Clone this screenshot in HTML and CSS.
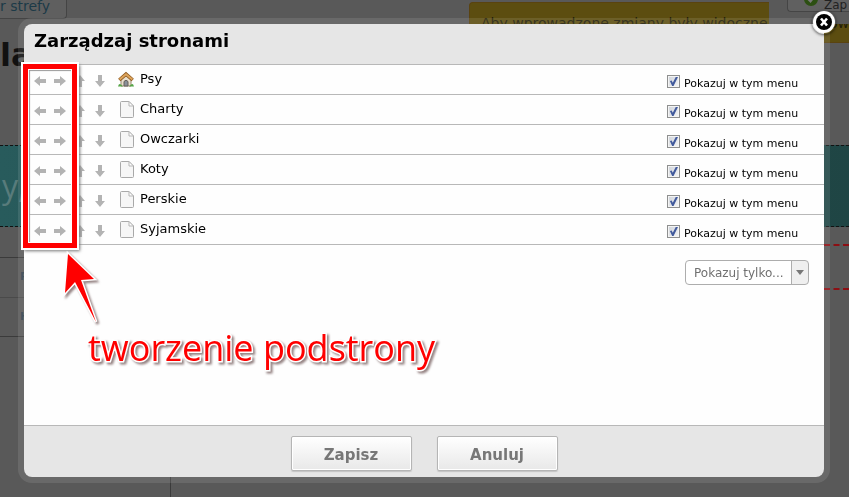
FILE: index.html
```
<!DOCTYPE html>
<html lang="pl">
<head>
    <meta charset="UTF-8">
    <meta name="viewport" content="width=device-width, initial-scale=1.0">
    <title>Zarządzaj stronami</title>
    <link rel="stylesheet" href="styles.css">
</head>
<body>
    <svg class="sprite" aria-hidden="true">
        <symbol id="arrow" viewBox="0 0 12 12">
            <path d="M0 6 L6 1 V4 H12 V8 H6 V11 Z"/>
        </symbol>
        <symbol id="page" viewBox="-2 0 16 17">
            <path d="M1.5 .5 H9 L13.500 5 V15.500 Q13.500 16.500 12.500 16.500 H1.500 Q.5 16.500 .5 15.500 V1.500 Q.5 .5 1.500 .5 Z" fill="#f6f6f6" stroke="#a9a9a9"/>
            <path d="M9 .5 V5 H13.500 Z" fill="#fff" stroke="#b5b5b5"/>
        </symbol>
        <symbol id="home" viewBox="0 0 16 15">
            <path d="M3 7 L8 3 L13 7 V14 H3 Z" fill="#e9dfcd" stroke="#9b8a74"/>
            <path d="M6 14 V9.500 Q8 7 10 9.500 V14 Z" fill="#8a8f99" stroke="#66605a"/>
            <path d="M1.300 8 L8 2.200 L14.700 8" fill="none" stroke="#8f5a20" stroke-width="3.600"/>
            <path d="M1.600 7.600 L8 2.200 L14.400 7.600" fill="none" stroke="#dda45c" stroke-width="2"/>
            <path d="M0 14.500 Q1 11 3 12.500 L5 14.500 Z M16 14.500 Q15 11 13 12.500 L11 14.500 Z" fill="#55a546"/>
        </symbol>
    </svg>

    <div class="page">
        <header class="topbar">
            <button class="zone-button">r strefy</button>
            <div class="toolbar">
                <button class="save-button">
                    <svg width="14" height="14" viewBox="0 0 14 14"><circle cx="7" cy="7" r="7" fill="#2c4f12"/><path d="M4 7 L6.500 9.500 L10.500 4.500" fill="none" stroke="#777" stroke-width="2"/></svg>
                    Zap
                </button>
            </div>
            <p class="notice"><span>Aby wprowadzone zmiany były widoczne ,</span><span>ow</span></p>
        </header>
        <h1 class="site-name">la</h1>
        <div class="banner">y,</div>
        <div class="fields">
            <div class="field-row">P</div>
            <div class="field-row">H</div>
        </div>
        <div class="marks"></div>
        <div class="columns"></div>
    </div>

    <div class="overlay">
        <div class="modal" role="dialog" aria-labelledby="modal-title">
            <button class="close" aria-label="Zamknij">
                <svg width="24" height="24" viewBox="0 0 24 24">
                    <circle cx="12" cy="12" r="11" fill="#fff"/>
                    <circle cx="12" cy="12" r="8" fill="#000"/>
                    <path d="M9 8.500 L15 15.500 M15 8.500 L9 15.500" stroke="#fff" stroke-width="2.600"/>
                </svg>
            </button>
            <h2 class="modal-title" id="modal-title">Zarządzaj stronami</h2>
            <div class="modal-body">
                <ul class="page-list" id="page-list"></ul>
                <div class="filter">
                    <select aria-label="Pokazuj tylko">
                        <option>Pokazuj tylko...</option>
                    </select>
                </div>
                <div class="highlight"></div>
                <div class="hint">
                    <svg width="40" height="80" viewBox="0 0 40 80">
                        <path d="M7 2 L33 27 L20 28 L35 70 L14 30 L4 41 Z"/>
                    </svg>
                    <span>tworzenie podstrony</span>
                </div>
            </div>
            <div class="modal-footer">
                <button>Zapisz</button>
                <button>Anuluj</button>
            </div>
        </div>
    </div>

    <script>
        const strony = ['Psy', 'Charty', 'Owczarki', 'Koty', 'Perskie', 'Syjamskie'];
        const kierunki = [['left', 'W lewo'], ['right', 'W prawo'], ['up', 'W górę'], ['down', 'W dół']];

        document.getElementById('page-list').innerHTML = strony.map((nazwa, i) => `
            <li class="page-row">
                <span class="moves">
                    ${kierunki.map(([k, opis]) => `<button aria-label="${opis}"><svg class="arrow ${k}"><use href="#arrow"/></svg></button>`).join('')}
                </span>
                <svg class="page-icon"><use href="#${i === 0 ? 'home' : 'page'}"/></svg>
                <span class="page-name">${nazwa}</span>
                <span class="in-menu">
                    <input type="checkbox" id="menu${i}" checked>
                    <label for="menu${i}">Pokazuj w tym menu</label>
                </span>
            </li>`).join('');
    </script>
</body>
</html>
```
FILE: styles.css
```
* {
    box-sizing: border-box;
}
body {
    margin: 0;
    height: 100vh;
    overflow: hidden;
    background-color: #595959;
    font-family: Verdana, "DejaVu Sans", sans-serif;
    color: #000;
}
button {
    font-family: inherit;
    cursor: pointer;
}
.sprite {
    position: absolute;
    width: 0;
    height: 0;
}

/* strona pod spodem */
.page {
    position: relative;
    z-index: 0;
    display: flex;
    flex-direction: column;
    height: 100vh;
}
.topbar {
    position: relative;
    display: flex;
    justify-content: space-between;
    align-items: flex-start;
    height: 36px;
    flex: none;
}
.zone-button {
    height: 19px;
    padding: 0 16px 5px 0;
    border: 1px solid #444;
    border-width: 0 1px 1px 0;
    border-radius: 0 0 4px 0;
    background-color: #5f5f5f;
    color: #1c3a47;
    font-size: 14px;
    line-height: 13px;
}
.toolbar {
    position: relative;
    z-index: 1;
    width: 80px;
    height: 24px;
    padding-left: 18px;
    background-color: #595959;
}
.save-button {
    display: flex;
    align-items: flex-start;
    gap: 6px;
    width: 100%;
    height: 12px;
    padding: 0 0 0 16px;
    border: 1px solid #454545;
    border-width: 0 0 1px 1px;
    border-radius: 0 0 0 4px;
    background-color: #606060;
    color: #222;
    font-size: 12px;
    line-height: 10px;
}
.save-button svg {
    flex: none;
    margin-top: -8px;
}
.notice {
    position: absolute;
    top: 2px;
    right: 0;
    display: flex;
    justify-content: space-between;
    width: 380px;
    height: 41px;
    margin: 0;
    padding: 10px 0 0 11px;
    border: 1px solid #5a4310;
    border-right: 0;
    border-radius: 4px 0 0 4px;
    background-color: #5c4d10;
    color: #221d08;
    font-size: 14px;
    line-height: 20px;
}
.site-name {
    height: 109px;
    margin: 0;
    color: #111;
    font-size: 32px;
    line-height: 38px;
}
.banner {
    height: 82px;
    padding-left: 2px;
    border: 1px dashed #111;
    border-width: 1px 0;
    background: linear-gradient(90deg, #285b5c, #1f4544);
    color: #587b7b;
    font-family: "Open Sans", sans-serif;
    font-size: 32px;
    line-height: 80px;
}
.fields {
    margin-top: 30px;
    border-top: 1px solid #3b3b3b;
    border-bottom: 1px solid #3b3b3b;
    width: 171px;
}
.field-row {
    height: 39px;
    padding-left: 20px;
    color: #33424f;
    font-size: 11px;
    font-weight: bold;
    line-height: 38px;
}
.field-row + .field-row {
    border-top: 1px solid #4a4a4a;
}
/* czerwone linie po prawej */
.marks {
    position: absolute;
    top: 244px;
    right: 0;
    width: 25px;
    height: 46px;
    border: 2px dashed #8c0f14;
    border-width: 2px 0;
}
.columns {
    flex: 1;
    width: 171px;
    border-right: 1px solid #3b3b3b;
}

/* okno */
.overlay {
    position: fixed;
    inset: 0;
    display: flex;
    padding: 18px 19px 14px 18px;
}
.modal {
    position: relative;
    display: flex;
    flex-direction: column;
    flex: 1;
    border: 6px solid rgba(255, 255, 255, 0.1);
    border-radius: 14px;
    background-color: #e6e6e6;
    background-clip: padding-box;
}
.close {
    position: absolute;
    top: -14px;
    right: -12px;
    width: 24px;
    height: 24px;
    padding: 0;
    border: 0;
    border-radius: 50%;
    background: none;
    box-shadow: 0 1px 3px rgba(0, 0, 0, 0.6);
}
.close svg {
    display: block;
}
.modal-title {
    margin: 0;
    padding: 0 10px;
    border-bottom: 1px solid #b8b8b8;
    font-size: 18px;
    line-height: 34px;
    height: 41px;
}
.modal-body {
    position: relative;
    flex: 1;
    background-color: #fefefe;
}
.page-list {
    margin: 0;
    padding: 0;
    list-style: none;
}
.page-row {
    display: flex;
    align-items: center;
    height: 30px;
    padding: 0 20px 0 10px;
    border-bottom: 1px solid #b8b8b8;
}
.moves {
    display: flex;
    gap: 8px;
    padding-top: 3px;
}
.moves button {
    width: 12px;
    height: 12px;
    padding: 0;
    border: 0;
    background: none;
}
.arrow {
    display: block;
    width: 12px;
    height: 12px;
    fill: #b3b3b3;
}
.arrow.right {
    transform: rotate(180deg);
}
.arrow.up {
    transform: rotate(90deg);
}
.arrow.down {
    transform: rotate(-90deg);
}
.page-icon {
    width: 16px;
    height: 17px;
    margin-left: 12px;
}
.page-name {
    flex: 1;
    margin-left: 6px;
    padding-bottom: 2px;
    font-size: 13px;
}
.in-menu {
    display: flex;
    align-items: center;
    gap: 4px;
    padding-top: 4px;
}
.in-menu label {
    min-width: 120px;
    padding-top: 4px;
    font-size: 11px;
    line-height: 13px;
}
.in-menu input {
    appearance: none;
    display: grid;
    place-items: center;
    width: 13px;
    height: 13px;
    margin: 0;
    border: 1px solid #8e8f8f;
    background: linear-gradient(135deg, #cdd2d9, #f6f6f6);
    box-shadow: inset 0 0 0 1px #f4f4f4;
}
.in-menu input:checked::before {
    content: "";
    width: 9px;
    height: 9px;
    background-color: #425a9c;
    clip-path: polygon(10% 45%, 30% 40%, 42% 65%, 75% 0, 100% 0, 50% 100%, 35% 100%);
}
.filter {
    position: relative;
    display: flex;
    justify-content: flex-end;
    padding: 15px 15px 0;
}
.filter select {
    appearance: none;
    width: 124px;
    height: 25px;
    padding: 0 8px;
    border: 1px solid #adadad;
    border-radius: 4px;
    background: linear-gradient(90deg, #adadad 1px, #efefef 1px) right / 17px 100% no-repeat #fff;
    color: #707070;
    font-family: inherit;
    font-size: 12px;
}
.filter::after {
    content: "";
    position: absolute;
    right: 20px;
    bottom: 10px;
    border: 4px solid transparent;
    border-top: 5px solid #777;
    border-bottom: 0;
    pointer-events: none;
}
.modal-footer {
    display: flex;
    justify-content: center;
    gap: 25px;
    padding: 10px 0 6px;
    border-top: 1px solid #b8b8b8;
}
.modal-footer button {
    width: 121px;
    height: 35px;
    padding-top: 3px;
    border: 1px solid #b5b5b5;
    border-radius: 2px;
    background: linear-gradient(#fff, #e8e8e8);
    box-shadow: inset 0 0 0 1px #fff, 0 1px 1px #c4c4c4;
    color: #777;
    font-size: 15px;
    font-weight: bold;
}

/* wskazówka na czerwono */
.highlight {
    position: absolute;
    top: -1px;
    left: -1px;
    width: 54px;
    height: 184px;
    border: 5px solid #f00;
    box-shadow: 0 0 0 2px #fff, 2px 2px 3px 1px #777, inset 0 0 0 1px #fff, inset 2px 2px 1px #999;
    pointer-events: none;
}
.hint {
    position: absolute;
    top: 187px;
    left: 37px;
    color: #f00;
    font-family: "Open Sans", sans-serif;
    font-size: 36px;
    line-height: 32px;
    white-space: nowrap;
    filter: drop-shadow(2px 2px 1px rgba(80, 50, 50, 0.6));
    pointer-events: none;
}
.hint svg {
    display: block;
    overflow: visible;
    fill: #f00;
    stroke: #fff;
    stroke-width: 3px;
    paint-order: stroke;
}
.hint span {
    margin-left: 27px;
    -webkit-text-stroke: 3px #fff;
    paint-order: stroke fill;
}
```
